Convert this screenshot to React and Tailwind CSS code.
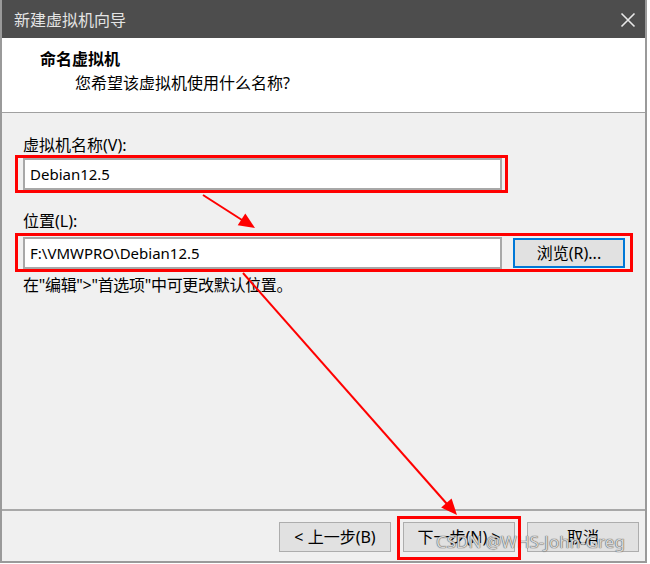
import React from "react";

const FONT = { fontFamily: '"Noto Sans", "Noto Sans CJK SC", sans-serif' };

function Btn({ children, focused }) {
  return (
    <div
      className={
        "w-[112px] h-[30px] flex items-center justify-center bg-[#e1e1e1] text-[16px] text-black " +
        (focused ? "border-2 border-[#0078d7]" : "border border-[#adadad]")
      }
    >
      {children}
    </div>
  );
}

export default function App() {
  return (
    <div className="relative w-[650px] h-[564px] bg-white overflow-hidden" style={FONT}>
      <div className="w-[647px] h-[563px] flex flex-col border-x-2 border-b-2 border-[#9a9a9a]">
        {/* Title bar */}
        <div className="h-[38px] shrink-0 bg-[#4d4d4d] flex items-center justify-between pl-[12px] pr-[9px]">
          <span className="text-[16px] text-[#e4e4e4] leading-none mt-[1px]">新建虚拟机向导</span>
          <svg width="16" height="16" viewBox="0 0 16 16" className="mt-[1px]">
            <path d="M1.5 1.5 L14.5 14.5 M14.5 1.5 L1.5 14.5" stroke="#e8e8e8" strokeWidth="1.6" fill="none" />
          </svg>
        </div>
        {/* Header */}
        <div className="h-[75px] shrink-0 bg-white border-b border-[#a0a0a0] pl-[38px] pt-[10px]">
          <div className="text-[16px] font-bold leading-[22px] text-black">命名虚拟机</div>
          <div className="text-[16px] leading-[22px] text-black ml-[35px] mt-[2px]">您希望该虚拟机使用什么名称?</div>
        </div>
        {/* Body */}
        <div className="flex-1 bg-[#f0f0f0] pl-[21px] pt-[22px] flex flex-col">
          <div className="text-[16px] leading-[20px] text-black">虚拟机名称(V):</div>
          <div className="mt-[3px] w-[479px] h-[32px] bg-white border-2 border-[#a8a8a8] flex items-center pl-[5px] text-[15px] text-black">
            Debian12.5
          </div>
          <div className="mt-[21px] text-[16px] leading-[20px] text-black">位置(L):</div>
          <div className="mt-[6px] flex items-center gap-[11px]">
            <div className="w-[479px] h-[32px] bg-white border-2 border-[#a8a8a8] flex items-center pl-[5px] text-[15px] text-black">
              F:\VMWPRO\Debian12.5
            </div>
            <Btn focused>浏览(R)...</Btn>
          </div>
          <div className="mt-[6px] text-[16px] leading-[20px] text-black tracking-[-0.3px]">在"编辑"&gt;"首选项"中可更改默认位置。</div>
        </div>
        {/* Footer */}
        <div className="h-[52px] shrink-0 bg-[#f0f0f0] border-t-2 border-[#a8a8a8] flex items-start justify-end pr-[6px] pt-[11px] gap-[12px]">
          <Btn>&lt; 上一步(B)</Btn>
          <Btn>下一步(N) &gt;</Btn>
          <Btn>取消</Btn>
        </div>
      </div>

      {/* Watermark */}
      <div className="absolute left-[436px] top-[531px] text-[17px] leading-[22px] text-[#d6d6d6] [text-shadow:0_0_1px_#555,0_0_1px_#555]">
        CSDN @WHS-John-Greg
      </div>

      {/* Annotation overlay */}
      <svg className="absolute inset-0 pointer-events-none" width="650" height="564" viewBox="0 0 650 564">
        <rect x="16.5" y="156.5" width="490" height="35" fill="none" stroke="#ff0000" strokeWidth="3" />
        <rect x="16.5" y="234.5" width="615" height="36" fill="none" stroke="#ff0000" strokeWidth="3" />
        <rect x="398.5" y="517.5" width="121" height="41" fill="none" stroke="#ff0000" strokeWidth="3" />
        <line x1="203" y1="195" x2="242" y2="220" stroke="#ff0000" strokeWidth="2" />
        <polygon points="255,228 237.7,225.3 245.3,213.5" fill="#ff0000" />
        <line x1="243" y1="273" x2="447" y2="504" stroke="#ff0000" strokeWidth="2" />
        <polygon points="457,515 441.2,507.6 451.6,498.4" fill="#ff0000" />
      </svg>
    </div>
  );
}
